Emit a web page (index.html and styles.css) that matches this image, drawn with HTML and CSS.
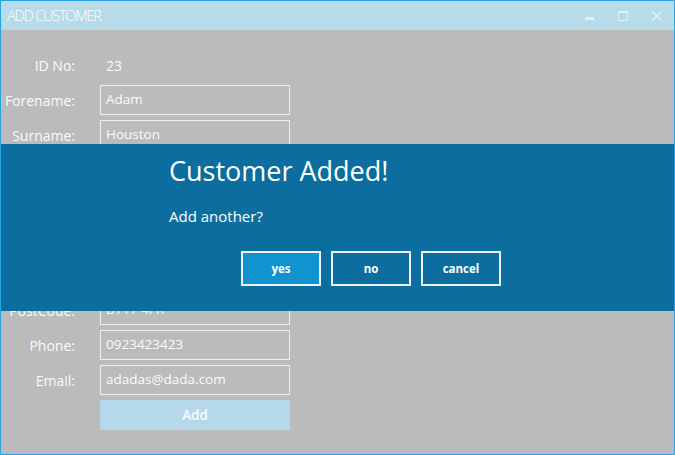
FILE: index.html
```html
<!DOCTYPE html>
<html>
<head>
<meta charset="utf-8">
<link rel="stylesheet" href="styles.css">
</head>
<body>
<div class="window">
  <div class="titlebar">
    <span class="title">ADD CUSTOMER</span>
    <div class="controls">
      <span class="ctl"><svg width="9" height="3" viewBox="0 0 9 3"><rect width="9" height="3" fill="#e3f1f7"/></svg></span>
      <span class="ctl"><svg width="10" height="10" viewBox="0 0 10 10"><rect x="0.5" y="0.5" width="9" height="9" fill="none" stroke="#e3f1f7"/><rect x="0" y="0" width="10" height="2" fill="#e3f1f7"/></svg></span>
      <span class="ctl"><svg width="10" height="10" viewBox="0 0 10 10"><path d="M0.5 0.5 L9.5 9.5 M9.5 0.5 L0.5 9.5" stroke="#e3f1f7" stroke-width="1.3"/></svg></span>
    </div>
  </div>
  <div class="content">
    <div class="form">
      <label class="lbl">ID No:</label><div class="val">23</div>
      <label class="lbl">Forename:</label><div class="input">Adam</div>
      <label class="lbl">Surname:</label><div class="input">Houston</div>
      <label class="lbl"></label><div class="input"></div>
      <label class="lbl"></label><div class="input"></div>
      <label class="lbl"></label><div class="input"></div>
      <label class="lbl"></label><div class="input"></div>
      <label class="lbl">PostCode:</label><div class="input">BT17 4FR</div>
      <label class="lbl">Phone:</label><div class="input">0923423423</div>
      <label class="lbl">Email:</label><div class="input">adadas@dada.com</div>
      <span></span><button class="add">Add</button>
    </div>
  </div>
  <div class="dialog">
    <div class="dialog-inner">
      <h1 class="dlg-title">Customer Added!</h1>
      <p class="dlg-msg">Add another?</p>
      <div class="dlg-buttons">
        <button class="dbtn primary">yes</button>
        <button class="dbtn">no</button>
        <button class="dbtn">cancel</button>
      </div>
    </div>
  </div>
</div>
</body>
</html>
```

FILE: styles.css
```css
html, body {
  margin: 0;
  padding: 0;
  background: #bbbbbb;
}
.window {
  position: relative;
  width: 675px;
  height: 455px;
  box-sizing: border-box;
  border: 1px solid #2aa3e0;
  background: #bbbbbb;
  font-family: "Open Sans", "Noto Sans", sans-serif;
  overflow: hidden;
}
.titlebar {
  height: 29px;
  background: #b7dbe9;
  display: flex;
  align-items: center;
  justify-content: space-between;
}
.title {
  color: #ffffff;
  font-weight: 300;
  font-size: 14.5px;
  padding-left: 6px;
  letter-spacing: -1.2px;
}
.controls {
  display: flex;
  height: 100%;
}
.ctl {
  width: 34px;
  display: flex;
  align-items: center;
  justify-content: center;
}
.ctl:first-child svg { margin-top: 6px; }
.content {
  padding-top: 20px;
}
.form {
  display: grid;
  grid-template-columns: 74px 190px;
  grid-auto-rows: 30px;
  column-gap: 25px;
  row-gap: 5px;
}
.lbl {
  color: #fafafa;
  font-size: 14px;
  text-align: right;
  align-self: center;
}
.val {
  color: #fafafa;
  font-size: 14px;
  padding-left: 6px;
  align-self: center;
}
.input {
  box-sizing: border-box;
  border: 1px solid #eeeeee;
  color: #fafafa;
  font-size: 13.5px;
  padding: 0 5px;
  line-height: 26px;
}
.add {
  border: none;
  background: #b5d9ea;
  color: #f8fbfd;
  font-family: "Open Sans", sans-serif;
  font-weight: 600;
  font-size: 13.5px;
  padding: 0;
}
.dialog {
  position: absolute;
  left: 0;
  right: 0;
  top: 143px;
  height: 167px;
  background: #0b6e9e;
}
.dialog-inner {
  margin-left: 168px;
  width: 332px;
  display: flex;
  flex-direction: column;
}
.dlg-title {
  margin: 9px 0 0 0;
  font-weight: 400;
  font-size: 27px;
  line-height: 36px;
  color: #ffffff;
}
.dlg-msg {
  margin: 17px 0 0 0;
  font-size: 15px;
  line-height: 20px;
  color: #ffffff;
}
.dlg-buttons {
  margin-top: 25px;
  display: flex;
  justify-content: flex-end;
  gap: 10px;
}
.dbtn {
  width: 80px;
  height: 35px;
  box-sizing: border-box;
  border: 2px solid #eef4f7;
  background: #0b6e9e;
  color: #ffffff;
  font-family: "Open Sans", sans-serif;
  font-weight: 700;
  font-size: 11.5px;
  padding: 0;
}
.dbtn.primary {
  background: #1193d0;
}
```
